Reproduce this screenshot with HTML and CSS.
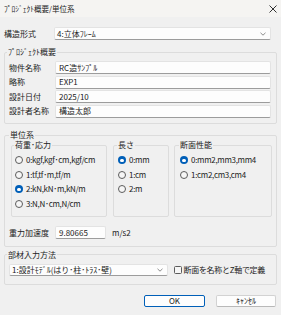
FILE: index.html
```html
<!DOCTYPE html>
<html>
<head lang="ja">
    <meta charset="UTF-8">
    <title>プロジェクト概要/単位系</title>
    <link rel="stylesheet" href="styles.css">
</head>
<body>
<div class="dialog">
    <div class="titlebar">
        <span class="title">ﾌﾟﾛｼﾞｪｸﾄ概要/単位系</span>
        <svg class="close" width="8" height="8" viewBox="0 0 8 8">
            <path d="M0.5 0.5L7.5 7.5M7.5 0.5L0.5 7.5" stroke="#1c1c1c" stroke-width="0.9" fill="none"/>
        </svg>
    </div>
    <div class="content">
        <!-- 構造形式 -->
        <div class="type-row">
            <span class="type-label">構造形式</span>
            <div class="select type-select">
                <span>4:立体ﾌﾚｰﾑ</span>
                <svg class="chevron" width="6" height="4" viewBox="0 0 6 4"><path d="M0.5 0.8L3 3.2L5.5 0.8" stroke="#707070" stroke-width="0.8" fill="none"/></svg>
            </div>
        </div>

        <!-- プロジェクト概要 -->
        <fieldset class="group g-project">
            <legend>ﾌﾟﾛｼﾞｪｸﾄ概要</legend>
            <div class="form-grid">
                <span>物件名称</span><div class="input">RC造ｻﾝﾌﾟﾙ</div>
                <span>略称</span><div class="input">EXP1</div>
                <span>設計日付</span><div class="input">2025/10</div>
                <span>設計者名称</span><div class="input">構造太郎</div>
            </div>
        </fieldset>

        <!-- 単位系 -->
        <fieldset class="group g-units">
            <legend>単位系</legend>
            <div class="unit-cols">
                <fieldset class="sub sub-load">
                    <legend>荷重･応力</legend>
                    <div class="radio-item"><span class="radio"></span>0:kgf,kgf･cm,kgf/cm</div>
                    <div class="radio-item"><span class="radio"></span>1:tf,tf･m,tf/m</div>
                    <div class="radio-item"><span class="radio on"></span>2:kN,kN･m,kN/m</div>
                    <div class="radio-item"><span class="radio"></span>3:N,N･cm,N/cm</div>
                </fieldset>
                <fieldset class="sub sub-length">
                    <legend>長さ</legend>
                    <div class="radio-item"><span class="radio on"></span>0:mm</div>
                    <div class="radio-item"><span class="radio"></span>1:cm</div>
                    <div class="radio-item"><span class="radio"></span>2:m</div>
                </fieldset>
                <fieldset class="sub sub-section">
                    <legend>断面性能</legend>
                    <div class="radio-item"><span class="radio on"></span>0:mm2,mm3,mm4</div>
                    <div class="radio-item"><span class="radio"></span>1:cm2,cm3,cm4</div>
                </fieldset>
            </div>
            <div class="gravity-row">
                <span class="gravity-label">重力加速度</span>
                <div class="input gravity-input">9.80665</div>
                <span class="unit">m/s2</span>
            </div>
        </fieldset>

        <!-- 部材入力方法 -->
        <fieldset class="group g-member">
            <legend>部材入力方法</legend>
            <div class="member-row">
                <div class="select member-select">
                    <span>1:設計ﾓﾃﾞﾙ(はり･柱･ﾄﾗｽ･壁)</span>
                    <svg class="chevron" width="6" height="4" viewBox="0 0 6 4"><path d="M0.5 0.8L3 3.2L5.5 0.8" stroke="#707070" stroke-width="0.8" fill="none"/></svg>
                </div>
                <div class="check"><span class="checkbox"></span>断面を名称とZ軸で定義</div>
            </div>
        </fieldset>

        <div class="buttons">
            <div class="btn btn-ok">OK</div>
            <div class="btn btn-cancel">ｷｬﾝｾﾙ</div>
        </div>
    </div>
</div>
</body>
</html>
```

FILE: styles.css
```css
* {
    margin: 0;
    padding: 0;
    box-sizing: border-box;
}

body {
    width: 281px;
    height: 315px;
    overflow: hidden;
    background: #f0f0f0;
    font-family: "Noto Sans CJK JP", sans-serif;
    font-size: 8px;
    line-height: 10px;
    color: #222;
}

.titlebar {
    height: 17px;
    background: #f5f4f2;
    display: flex;
    align-items: center;
    justify-content: space-between;
    padding: 0 4px;
}

.title {
    font-size: 7.5px;
}

.content {
    padding: 10px 4px 0 4px;
}

/* 入力欄・コンボ */
.input,
.select {
    height: 13px;
    background: #fdfdfd;
    border: 1px solid #e3e3e3;
    border-bottom-color: #9c9c9c;
    border-radius: 2px;
    display: flex;
    align-items: center;
    padding: 0 3px;
    white-space: nowrap;
}

.select {
    justify-content: space-between;
    padding: 0 4px 0 2px;
}

.type-row {
    display: flex;
    align-items: center;
}

.type-label {
    width: 50px;
}

.type-select {
    flex: 1;
    margin-right: 6px;
}

/* グループ枠 */
fieldset {
    border: 1px solid #dcdcdc;
    border-radius: 2px;
}

legend {
    padding: 0 1px;
    margin-left: -2px;
    line-height: 10px;
}

.g-project {
    margin-top: 7px;
    padding: 4px 5px 5.5px 4px;
}

.form-grid {
    display: grid;
    grid-template-columns: 46px 1fr;
    row-gap: 1.5px;
    align-items: center;
}

.g-units {
    margin-top: 6px;
    padding: 0 4px 6.5px 6px;
}

.unit-cols {
    display: flex;
    gap: 6px;
}

.sub {
    padding: 3px 3px 5px 3px;
}

.sub legend {
    margin-left: -1px;
}

.sub-load {
    width: 96px;
}

.sub-length {
    width: 56px;
    padding-left: 4px;
}

.sub-section {
    flex: 1;
    margin-left: -1px;
    padding-left: 5px;
}

.radio-item {
    height: 14.6px;
    display: flex;
    align-items: center;
    gap: 3px;
    white-space: nowrap;
    letter-spacing: -0.3px;
}

.radio {
    width: 8px;
    height: 8px;
    flex: none;
    border-radius: 50%;
    border: 1px solid #5c5c5c;
    background: #f6f6f6;
}

.radio.on {
    border: none;
    background: #005fb8;
    display: flex;
    align-items: center;
    justify-content: center;
}

.radio.on::after {
    content: "";
    width: 3.4px;
    height: 3.4px;
    border-radius: 50%;
    background: #fff;
}

.gravity-row {
    display: flex;
    align-items: center;
    margin-top: 9px;
    margin-left: -2px;
}

.gravity-label {
    width: 46px;
}

.gravity-input {
    width: 51px;
}

.unit {
    margin-left: 6px;
}

.g-member {
    margin-top: 3px;
    padding: 4px 4px 8px 4px;
}

.member-row {
    display: flex;
    align-items: center;
}

.member-select {
    width: 159px;
    height: 12.5px;
}

.check {
    display: flex;
    align-items: center;
    gap: 1.5px;
    margin-left: 6px;
    white-space: nowrap;
    letter-spacing: -0.3px;
}

.checkbox {
    width: 8px;
    height: 8px;
    border: 1px solid #5c5c5c;
    border-radius: 1.5px;
    background: #f6f6f6;
}

/* ボタン */
.buttons {
    display: flex;
    justify-content: flex-end;
    gap: 11px;
    margin-top: 10px;
    padding-right: 1px;
}

.btn {
    height: 12px;
    display: flex;
    align-items: center;
    justify-content: center;
    background: #fdfdfd;
    border: 1px solid #d2d2d2;
    border-bottom-color: #b8b8b8;
    border-radius: 2px;
}

.btn-ok {
    width: 61px;
    border: 1px solid #005fb8;
}

.btn-cancel {
    width: 60px;
}
```
